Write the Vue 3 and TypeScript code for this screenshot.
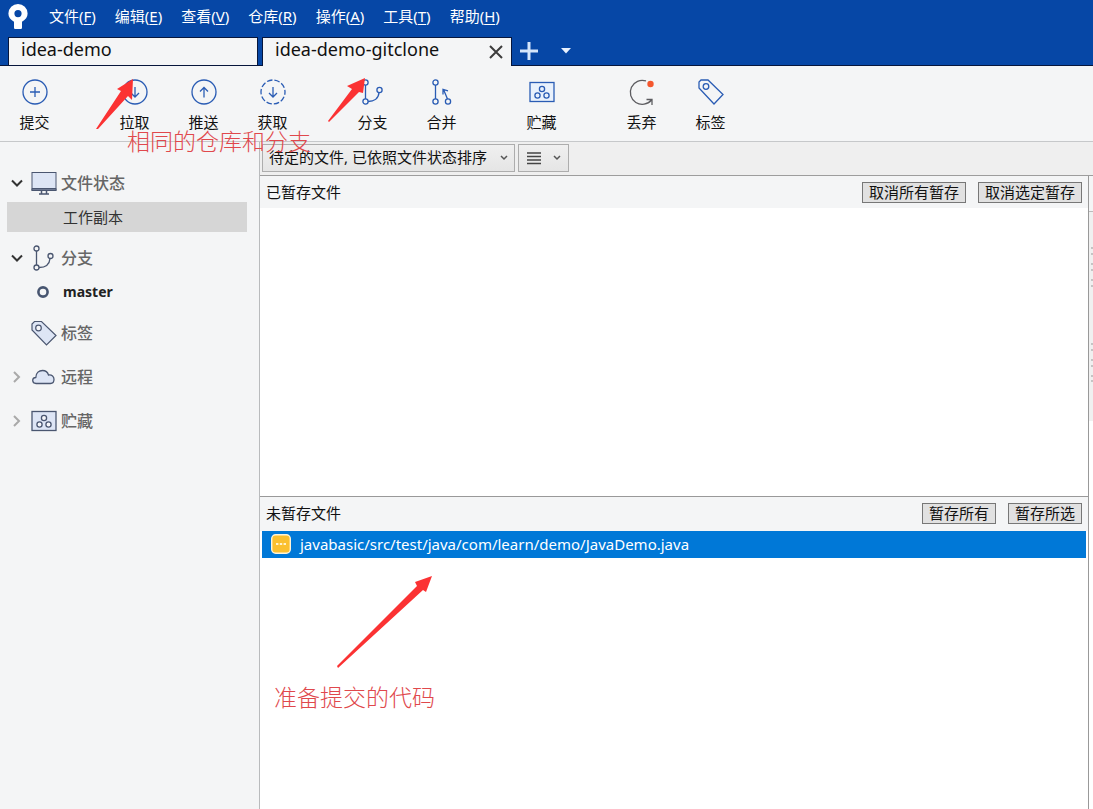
<script setup lang="ts">
interface Menu { label: string; key: string }
interface Tool { label: string; icon: string }

const menus: Menu[] = [
  { label: '文件', key: 'F' },
  { label: '编辑', key: 'E' },
  { label: '查看', key: 'V' },
  { label: '仓库', key: 'R' },
  { label: '操作', key: 'A' },
  { label: '工具', key: 'T' },
  { label: '帮助', key: 'H' },
]

const toolGroups: Tool[][] = [
  [{ label: '提交', icon: 'commit' }],
  [
    { label: '拉取', icon: 'pull' },
    { label: '推送', icon: 'push' },
    { label: '获取', icon: 'fetch' },
  ],
  [
    { label: '分支', icon: 'branch' },
    { label: '合并', icon: 'merge' },
  ],
  [{ label: '贮藏', icon: 'stash' }],
  [
    { label: '丢弃', icon: 'discard' },
    { label: '标签', icon: 'tag' },
  ],
]
</script>

<template>
  <div class="app">
    <header class="top">
      <div class="menubar">
        <svg class="logo" width="20" height="26" viewBox="0 0 20 26" aria-hidden="true">
          <path fill="#fff" fill-rule="evenodd" d="M10 0a9.6 9.6 0 0 0-9.6 9.6c0 3.600 2 6.200 5.600 8.200V23.500c0 1 .6 1.500 1.500 1.500h5c.9 0 1.500-.5 1.500-1.500V17.800c3.600-2 5.600-4.600 5.600-8.200A9.600 9.600 0 0 0 10 0zm0 6a3.600 3.600 0 1 1 0 7.200A3.600 3.600 0 0 1 10 6z" />
        </svg>
        <nav class="menus">
          <button v-for="m in menus" :key="m.key" class="menu" type="button">{{ m.label }}(<u>{{ m.key }}</u>)</button>
        </nav>
      </div>
      <div class="tabs">
        <div class="tab"><button class="tab-name" type="button">idea-demo</button></div>
        <div class="tab active">
          <button class="tab-name" type="button">idea-demo-gitclone</button>
          <button class="close" type="button" aria-label="关闭">
            <svg width="14" height="14" viewBox="0 0 14 14"><path d="M1 1l12 12M13 1L1 13" stroke="#3c3c3c" stroke-width="2" /></svg>
          </button>
        </div>
        <button class="tab-action" type="button" aria-label="新建标签页">
          <svg width="18" height="18" viewBox="0 0 18 18"><path d="M9 0v18M0 9h18" stroke="#d5e6fb" stroke-width="3" /></svg>
        </button>
        <button class="tab-action" type="button" aria-label="标签页列表">
          <svg width="10" height="6" viewBox="0 0 10 6"><path d="M0 0h10L5 5.500z" fill="#e8f2ff" /></svg>
        </button>
      </div>
    </header>

    <div class="toolbar">
      <div v-for="(group, i) in toolGroups" :key="i" class="group">
        <button v-for="t in group" :key="t.icon" class="tool" type="button">
          <svg width="28" height="28" viewBox="0 0 28 28" fill="none" stroke="#2a5cb4" stroke-width="1.300">
            <template v-if="t.icon === 'commit'">
              <circle cx="14" cy="14" r="12" /><path d="M14 9v10M9 14h10" />
            </template>
            <template v-else-if="t.icon === 'pull'">
              <circle cx="14" cy="14" r="12" /><path d="M14 9v10M10 15l4 4 4-4" />
            </template>
            <template v-else-if="t.icon === 'push'">
              <circle cx="14" cy="14" r="12" /><path d="M14 19.500v-10M10 13.500l4-4 4 4" />
            </template>
            <template v-else-if="t.icon === 'fetch'">
              <circle cx="14" cy="14" r="12" stroke-dasharray="5.500 2.040" stroke-dashoffset="2.700" /><path d="M14 9v10M10 15l4 4 4-4" />
            </template>
            <template v-else-if="t.icon === 'branch'">
              <circle cx="6.500" cy="4.500" r="2.600" /><circle cx="6.500" cy="23.500" r="2.600" /><circle cx="20.500" cy="12" r="2.600" />
              <path d="M6.500 7.100v13.800M9.100 23.500c6 0 10.400-3.200 10.900-8.900" />
            </template>
            <template v-else-if="t.icon === 'merge'">
              <circle cx="7.500" cy="4.500" r="2.600" /><circle cx="7.500" cy="23.500" r="2.600" /><circle cx="20" cy="23.500" r="2.600" />
              <path d="M7.500 7.100v13.800M19.500 20.900L15.500 11.500M15 16.500v-5.200l5 1.500" />
            </template>
            <template v-else-if="t.icon === 'stash'">
              <rect x="2" y="4.500" width="24" height="19" fill="#e9f1fc" />
              <circle cx="14" cy="11" r="2.600" /><circle cx="9.500" cy="17.500" r="2.600" /><circle cx="18.500" cy="17.500" r="2.600" />
            </template>
            <template v-else-if="t.icon === 'discard'">
              <path d="M18 2.900A12 12 0 1 0 23.500 22M18.500 21.500h5.500v5.500" stroke="#5c5c60" />
              <circle cx="22.500" cy="6" r="3.200" fill="#f4572e" stroke="none" />
            </template>
            <template v-else>
              <path d="M2 9V4l2-2h7l15 14.500-9 9.500L2 10z" /><circle cx="9" cy="8.500" r="2.800" />
            </template>
          </svg>
          <span>{{ t.label }}</span>
        </button>
      </div>
    </div>

    <div class="body">
      <aside class="sidebar">
        <button class="head" type="button">
          <svg class="chev" width="12" height="12" viewBox="0 0 12 12"><path d="M1 3.500l5 5 5-5" fill="none" stroke="#333" stroke-width="2" /></svg>
          <svg class="ico" width="26" height="26" viewBox="0 0 26 26">
            <rect x="1" y="2.500" width="24" height="18" fill="#dde5f5" stroke="#4a5670" />
            <path d="M1 18.500h24v2H1z" fill="#6d7892" stroke="#4a5670" /><path d="M10.500 21v2.500M15.500 21v2.500M8 24h10" stroke="#4a5670" stroke-width="1.500" />
          </svg>
          <span>文件状态</span>
        </button>
        <button class="child selected" type="button">工作副本</button>
        <button class="head second" type="button">
          <svg class="chev" width="12" height="12" viewBox="0 0 12 12"><path d="M1 3.500l5 5 5-5" fill="none" stroke="#333" stroke-width="2" /></svg>
          <svg class="ico" width="26" height="26" viewBox="0 0 26 26" fill="none" stroke="#4a5670" stroke-width="1.300">
            <circle cx="5.500" cy="3.500" r="2.500" /><circle cx="5.500" cy="22.500" r="2.500" /><circle cx="19.500" cy="11" r="2.500" />
            <path d="M5.500 6v14M8 22.500c6 0 10.500-3 11-9" />
          </svg>
          <span>分支</span>
        </button>
        <button class="child branch" type="button">
          <svg class="dot" width="12" height="12" viewBox="0 0 12 12"><circle cx="6" cy="6" r="4.600" fill="none" stroke="#475570" stroke-width="2.600" /></svg>
          <span>master</span>
        </button>
        <div class="rest">
          <button class="head tall" type="button">
            <span class="chev" />
            <svg class="ico" width="26" height="26" viewBox="0 0 26 26" fill="#dde5f5" stroke="#4a5670" stroke-width="1.200">
              <path d="M1 9.500V4l2.500-2.500h7L25 15.500 15.500 25 1 10z" /><circle cx="7.500" cy="8" r="2.800" fill="#f5f6fa" />
            </svg>
            <span>标签</span>
          </button>
          <button class="head tall" type="button">
            <svg class="chev" width="12" height="12" viewBox="0 0 12 12"><path d="M3 1l5 5-5 5" fill="none" stroke="#a9a9a9" stroke-width="2" /></svg>
            <svg class="ico" width="26" height="26" viewBox="0 0 26 26">
              <path d="M5 19.500c-4.200 0-4.500-5.800-.2-6C5 9 8 6.500 11.500 6.500c3 0 5.200 1.700 6 4.500 3.500-.5 5.500 1.700 5.500 4.300 0 2.500-1.500 4.200-3.500 4.200z" fill="#dde5f5" stroke="#4a5670" stroke-width="1.300" />
            </svg>
            <span>远程</span>
          </button>
          <button class="head tall" type="button">
            <svg class="chev" width="12" height="12" viewBox="0 0 12 12"><path d="M3 1l5 5-5 5" fill="none" stroke="#a9a9a9" stroke-width="2" /></svg>
            <svg class="ico" width="26" height="26" viewBox="0 0 26 26" fill="#dde5f5" stroke="#4a5670" stroke-width="1.300">
              <rect x="1" y="3.500" width="24" height="19" />
              <g fill="#f5f6fa"><circle cx="13" cy="10" r="2.600" /><circle cx="8.500" cy="16.500" r="2.600" /><circle cx="17.500" cy="16.500" r="2.600" /></g>
            </svg>
            <span>贮藏</span>
          </button>
        </div>
      </aside>

      <main class="main">
        <div class="filters">
          <div class="select-box">
            <select aria-label="文件排序">
              <option>待定的文件, 已依照文件状态排序</option>
            </select>
            <svg class="arrow" width="8" height="6" viewBox="0 0 8 6"><path d="M1 1l3 3 3-3" fill="none" stroke="#555" stroke-width="1.500" /></svg>
          </div>
          <button class="view" type="button" aria-label="视图">
            <svg width="14" height="13" viewBox="0 0 14 13"><path d="M0 1h14M0 4.500h14M0 8h14M0 11.500h14" stroke="#444" stroke-width="1.500" /></svg>
            <svg width="8" height="6" viewBox="0 0 8 6"><path d="M1 1l3 3 3-3" fill="none" stroke="#555" stroke-width="1.500" /></svg>
          </button>
        </div>
        <div class="content">
          <div class="panes">
            <section class="pane staged">
              <div class="pane-head">
                <span class="title">已暂存文件</span>
                <button class="btn" type="button">取消所有暂存</button>
                <button class="btn" type="button">取消选定暂存</button>
              </div>
            </section>
            <section class="pane unstaged">
              <div class="pane-head low">
                <span class="title">未暂存文件</span>
                <button class="btn" type="button">暂存所有</button>
                <button class="btn" type="button">暂存所选</button>
              </div>
              <button class="file" type="button">
                <svg width="20" height="20" viewBox="0 0 20 20">
                  <rect x="0.700" y="0.700" width="18.600" height="18.600" rx="4" fill="#fbc02f" stroke="#fff4d8" stroke-width="1.400" />
                  <path d="M5 9h2.400v2H5zM8.800 9h2.400v2H8.800zM12.600 9H15v2h-2.400z" fill="#fff3cf" />
                </svg>
                <span>javabasic/src/test/java/com/learn/demo/JavaDemo.java</span>
              </button>
            </section>
          </div>
          <div class="edge">
            <div class="edge-top" />
            <div class="edge-mid">
              <svg width="4" height="170" viewBox="0 0 4 170"><path d="M2 36h2M2 42h2M2 52h2M2 58h2M2 68h2M2 74h2M2 132h2M2 138h2M2 148h2M2 154h2M2 164h2M2 169h2" stroke="#999" /></svg>
            </div>
          </div>
        </div>
      </main>
    </div>

    <svg class="marks" width="440" height="680" viewBox="0 0 440 680" fill="#fb3233" aria-hidden="true">
      <path d="M133 79L117 89L121 91L96 129L98 129L128 96L132 100z" />
      <path d="M365 78L347 86L352 89L328 121L329 122L359 92L363 93z" />
      <path d="M432 576L415 582L417 586L337 666L338 668L423 590L426 592z" />
    </svg>
    <p class="note repo">相同的仓库和分支</p>
    <p class="note code">准备提交的代码</p>
  </div>
</template>

<style>
body { margin: 0; }
</style>

<style scoped>
* { box-sizing: border-box; }
.app {
  position: relative;
  display: flex;
  flex-direction: column;
  min-height: 100vh;
  background: #f4f5f6;
  color: #111;
  font-family: "Noto Sans", "Noto Sans CJK SC", sans-serif;
  font-size: 15px;
  line-height: 20px;
}
button {
  margin: 0;
  padding: 0;
  border: 0;
  background: none;
  color: inherit;
  font: inherit;
  white-space: nowrap;
}
svg { display: block; flex: none; }
.top { background: #0647a6; border-bottom: 1px solid #06163c; }
.menubar { display: flex; align-items: center; height: 37px; padding: 0 8px 4px; }
.menus { display: flex; gap: 19px; padding: 0 0 2px 21px; }
.menu { color: #fff; }
.menu u { text-underline-offset: 2px; }
.tabs { display: flex; height: 28px; padding-left: 8px; }
.tab {
  display: flex;
  align-items: center;
  width: 250px;
  margin-right: 4px;
  padding: 0 8px 0 12px;
  border: 1px solid #06163c;
  border-bottom: 0;
  background: #f4f5f6;
  font-size: 18px;
}
.tab.active { margin-right: 6px; margin-bottom: -1px; }
.tab-name { flex: 1; height: 24px; margin-bottom: 6px; line-height: 24px; text-align: left; }
.close { padding: 0; }
.tab-action { padding: 0 3px 0 2px; margin-right: 18px; }
.toolbar {
  display: flex;
  gap: 31px;
  height: 76px;
  padding-top: 12px;
  border-bottom: 1px solid #c6c8ca;
}
.group { display: flex; }
.tool { display: flex; flex-direction: column; align-items: center; gap: 6px; width: 69px; height: 54px; }
.body { display: flex; flex: 1; }
.sidebar { width: 260px; padding-top: 22px; border-right: 1px solid #b9bbbd; flex: none; }
.head {
  display: flex;
  align-items: center;
  width: 100%;
  height: 38px;
  padding-left: 11px;
  color: #666;
  font-size: 16px;
  font-weight: 500;
}
.head.second { margin-top: 7px; }
.head.tall { height: 44px; }
.chev { width: 12px; }
.ico { margin: 0 4px 0 8px; }
.child { display: flex; align-items: center; width: 240px; height: 30px; margin-left: 7px; padding-left: 56px; color: #333; }
.child.selected { background: #d6d6d6; }
.child.branch { padding-left: 30px; font-weight: 700; font-size: 14px; color: #222; }
.dot { margin-right: 14px; }
.rest { padding-top: 4px; }
.main { display: flex; flex: 1; flex-direction: column; min-width: 0; }
.filters { display: flex; gap: 3px; height: 34px; padding: 2px 2px 3px; background: #efefef; border-bottom: 1px solid #9d9d9d; }
.select-box { position: relative; width: 253px; height: 28px; }
.select-box select {
  width: 100%;
  height: 100%;
  margin: 0;
  padding: 0 24px 2px 6px;
  border: 1px solid #adadad;
  border-radius: 0;
  background: linear-gradient(#f0f0f0, #e5e5e5);
  color: inherit;
  font: inherit;
  appearance: none;
}
.arrow { position: absolute; right: 7px; top: 11px; }
.view {
  display: flex;
  align-items: center;
  justify-content: space-between;
  width: 51px;
  height: 28px;
  padding: 0 7px 0 8px;
  border: 1px solid #adadad;
  background: linear-gradient(#f0f0f0, #e5e5e5);
}
.content { display: flex; flex: 1; }
.panes { display: flex; flex: 1; flex-direction: column; min-width: 0; background: #fff; border-right: 1px solid #999; }
.pane { flex: 1 0 0; }
.staged { flex-grow: 320; }
.unstaged { flex-grow: 312; border-top: 1px solid #999; }
.pane-head { display: flex; align-items: center; gap: 12px; height: 32px; padding: 0 6px; background: #f4f5f6; }
.pane-head.low { height: 34px; padding-bottom: 2px; }
.title { flex: 1; padding-bottom: 1px; }
.btn { height: 21px; padding: 0 6px; border: 1px solid #777; background: #e1e1e1; line-height: 19px; }
.file {
  display: flex;
  align-items: center;
  gap: 9px;
  width: calc(100% - 4px);
  height: 27px;
  margin-left: 2px;
  padding: 0 0 1px 9px;
  background: #0078d7;
  color: #fff;
}
.edge { width: 4px; background: #fff; }
.edge-top { height: 36px; background: #f4f5f6; border-bottom: 1px solid #bbb; }
.edge-mid { height: 209px; background: #f0f0f0; }
.marks { position: absolute; left: 0; top: 0; pointer-events: none; }
.note {
  position: absolute;
  margin: 0;
  color: #e0484c;
  font-family: "Liberation Serif", "Noto Sans CJK SC", serif;
  font-size: 23px;
  font-weight: 300;
  line-height: 28px;
  white-space: nowrap;
}
.repo { left: 127px; top: 129px; }
.code { left: 274px; top: 685px; }
</style>
